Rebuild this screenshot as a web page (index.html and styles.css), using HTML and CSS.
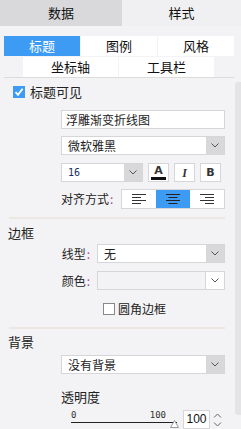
FILE: index.html
```html
<!DOCTYPE html>
<html lang="zh">
<head>
    <meta charset="UTF-8">
    <title>样式设置</title>
    <link rel="stylesheet" href="styles.css">
</head>
<body>

<div class="top-tabs">
    <div class="top-tab">数据</div>
    <div class="top-tab active">样式</div>
</div>

<div class="body-wrap">
    <div class="panel">
        <div class="sub-tabs">
            <div class="sub-row">
                <div class="sub-tab active">标题</div>
                <div class="sub-tab">图例</div>
                <div class="sub-tab">风格</div>
            </div>
            <div class="sub-row second">
                <div class="sub-tab">坐标轴</div>
                <div class="sub-tab">工具栏</div>
            </div>
        </div>

        <label class="check-row visible">
            <span class="check on">
                <svg width="10" height="10" viewBox="0 0 10 10"><path d="M1.5 5.2 L4 7.8 L8.6 1.8" fill="none" stroke="#fff" stroke-width="1.8"/></svg>
            </span>
            标题可见
        </label>

        <div class="field title-input"><div class="text-input">浮雕渐变折线图</div></div>
        <div class="field">
            <div class="select"><span class="sel-text">微软雅黑</span><span class="sel-arrow"><svg width="8" height="5" viewBox="0 0 8 5"><path d="M0.5 0.5 L4 4 L7.5 0.5" fill="none" stroke="#555" stroke-width="1"/></svg></span></div>
        </div>

        <div class="field font-row">
            <div class="select size"><span class="sel-text num">16</span><span class="sel-arrow"><svg width="8" height="5" viewBox="0 0 8 5"><path d="M0.5 0.5 L4 4 L7.5 0.5" fill="none" stroke="#555" stroke-width="1"/></svg></span></div>
            <div class="icon-btn color-a"><span class="a-letter">A</span><span class="a-bar"></span></div>
            <div class="icon-btn italic">I</div>
            <div class="icon-btn bold">B</div>
        </div>

        <div class="align-row">
            <span class="label">对齐方式<span class="colon">:</span></span>
            <div class="seg">
                <div class="seg-btn">
                    <svg width="14" height="11" viewBox="0 0 14 11"><path d="M0 0.5H14M0 3.5H9M0 6.5H14M0 9.5H9" stroke="#333" stroke-width="1"/></svg>
                </div>
                <div class="seg-btn active">
                    <svg width="14" height="11" viewBox="0 0 14 11"><path d="M0 0.5H14M2.5 3.5H11.5M0 6.5H14M2.5 9.5H11.5" stroke="#222" stroke-width="1"/></svg>
                </div>
                <div class="seg-btn">
                    <svg width="14" height="11" viewBox="0 0 14 11"><path d="M0 0.5H14M5 3.5H14M0 6.5H14M5 9.5H14" stroke="#333" stroke-width="1"/></svg>
                </div>
            </div>
        </div>

        <div class="divider"></div>

        <div class="section-title">边框</div>
        <div class="form-row">
            <span class="label right">线型<span class="colon">:</span></span>
            <div class="select grow"><span class="sel-text">无</span><span class="sel-arrow"><svg width="8" height="5" viewBox="0 0 8 5"><path d="M0.5 0.5 L4 4 L7.5 0.5" fill="none" stroke="#555" stroke-width="1"/></svg></span></div>
        </div>
        <div class="form-row next">
            <span class="label right">颜色<span class="colon">:</span></span>
            <div class="select grow disabled"><span class="sel-text"></span><span class="sel-arrow"><svg width="8" height="5" viewBox="0 0 8 5"><path d="M0.5 0.5 L4 4 L7.5 0.5" fill="none" stroke="#555" stroke-width="1"/></svg></span></div>
        </div>
        <label class="check-row round">
            <span class="check"></span>
            圆角边框
        </label>

        <div class="divider second"></div>

        <div class="section-title bg">背景</div>
        <div class="field bg-select">
            <div class="select"><span class="sel-text">没有背景</span><span class="sel-arrow"><svg width="8" height="5" viewBox="0 0 8 5"><path d="M0.5 0.5 L4 4 L7.5 0.5" fill="none" stroke="#555" stroke-width="1"/></svg></span></div>
        </div>
        <div class="opacity-label">透明度</div>
        <div class="slider-row">
            <div class="slider">
                <div class="ticks"><span>0</span><span>100</span></div>
                <div class="track"></div>
                <svg class="thumb" width="9" height="8" viewBox="0 0 9 8"><path d="M4.5 0.5 L8.5 7.5 L0.5 7.5 Z" fill="#fff" stroke="#999" stroke-width="1"/></svg>
            </div>
            <div class="spin">
                <span class="spin-val">100</span>
                <span class="spin-arrows">
                    <svg width="9" height="16" viewBox="0 0 9 16"><path d="M1 5.5 L4.5 2 L8 5.5 M1 10.5 L4.5 14 L8 10.5" fill="none" stroke="#666" stroke-width="1"/></svg>
                </span>
            </div>
        </div>
    </div>
    <div class="scroll"><div class="thumb-bar"></div></div>
</div>

</body>
</html>
```

FILE: styles.css
```css
body {
    margin: 0;
    width: 241px;
    height: 429px;
    overflow: hidden;
    background: #f3f3f5;
    font-family: "Noto Sans CJK SC", "Liberation Sans", sans-serif;
    font-size: 12px;
    line-height: 16px;
    color: #222;
}

.top-tabs {
    display: flex;
    height: 26px;
}

.top-tab {
    flex: 0 0 122px;
    background: #d9d9dc;
    text-align: center;
    line-height: 26px;
    font-size: 13px;
    color: #111;
}

.top-tab.active {
    flex: 1;
    background: #f0f0f2;
}

.body-wrap {
    display: flex;
}

.panel {
    width: 235px;
}

.scroll {
    width: 6px;
    padding-top: 56px;
}

.thumb-bar {
    height: 333px;
    background: #e4e4e7;
    border-radius: 3px 0 0 3px;
}

/* sub tabs */
.sub-tabs {
    margin: 10px 1px 0 4px;
    border-bottom: 1px solid #dcdcdc;
}

.sub-row {
    display: flex;
    gap: 1px;
}

.sub-row.second {
    margin-top: 1px;
    padding-left: 19px;
}

.sub-tab {
    flex: 0 0 76px;
    height: 20px;
    line-height: 20px;
    font-size: 13px;
    background: #fff;
    text-align: center;
    color: #111;
}

.sub-row.second .sub-tab {
    flex: 0 0 95px;
}

.sub-tab.active {
    background: #3e9bf4;
    color: #fff;
}

/* checkbox */
.check-row {
    display: flex;
    align-items: center;
    gap: 5px;
    height: 12px;
    white-space: nowrap;
}

.check-row.visible {
    margin: 8px 0 0 13px;
    font-size: 13px;
}

.check {
    flex: 0 0 auto;
    width: 10px;
    height: 10px;
    border: 1px solid #777;
    background: #fff;
    display: flex;
    align-items: center;
    justify-content: center;
}

.check.on {
    border-color: #3e9bf4;
    background: #3e9bf4;
}

.check-row.round {
    margin: 13px 0 0 103px;
    gap: 3px;
}

.check-row.round .check {
    border-color: #888;
}

/* fields */
.field {
    margin: 7px 0 0 61px;
    width: 164px;
}

.field.title-input {
    margin-top: 12px;
}

.text-input {
    height: 17px;
    line-height: 17px;
    background: #fff;
    border: 1px solid #d6d6d8;
    padding-left: 4px;
}

.select {
    display: flex;
    height: 19px;
    background: #fff;
    border: 1px solid #d6d6d8;
    box-sizing: border-box;
}

.sel-text {
    flex: 1;
    line-height: 17px;
    padding-left: 6px;
}

.sel-text.num {
    font-family: "DejaVu Sans Mono", monospace;
    font-size: 10px;
    color: #1a2a6a;
}

.sel-arrow {
    width: 18px;
    background: #d8d8db;
    display: flex;
    align-items: center;
    justify-content: center;
}

.select.disabled {
    background: #f3f3f5;
}

.select.disabled .sel-arrow {
    background: #fff;
    border-left: 1px solid #d6d6d8;
}

.font-row {
    display: flex;
    gap: 5px;
    height: 19px;
    margin-top: 8px;
}

.select.size {
    flex: 0 0 82px;
}

.icon-btn {
    width: 21px;
    height: 19px;
    box-sizing: border-box;
    background: #fff;
    border: 1px solid #d6d6d8;
    display: flex;
    align-items: center;
    justify-content: center;
    font-family: "DejaVu Sans", sans-serif;
    color: #333;
}

.color-a {
    flex-direction: column;
}

.a-letter {
    font-weight: bold;
    font-size: 11px;
    line-height: 10px;
}

.a-bar {
    width: 15px;
    height: 3px;
    background: #111;
    margin-top: 1px;
}

.italic {
    font-style: italic;
    font-weight: bold;
    font-family: "Liberation Serif", serif;
    font-size: 12px;
}

.bold {
    font-weight: bold;
    font-size: 11px;
}

.align-row {
    display: flex;
    align-items: center;
    gap: 8px;
    height: 20px;
    margin: 7px 0 0 61px;
    white-space: nowrap;
}

.colon {
    color: #b04090;
    margin-left: 1px;
}

.seg {
    display: flex;
    border: 1px solid #d6d6d8;
    background: #fff;
    height: 20px;
    box-sizing: border-box;
}

.seg-btn {
    width: 34px;
    display: flex;
    align-items: center;
    justify-content: center;
}

.seg-btn.active {
    background: #3e9bf4;
}

.divider {
    height: 2px;
    background: #ece8e1;
    margin: 8px 10px 0 9px;
}

.divider.second {
    margin-top: 12px;
}

.section-title {
    margin: 6px 0 0 8px;
    height: 16px;
    font-size: 13px;
}

.section-title.bg {
    margin-top: 5px;
}

.form-row {
    display: flex;
    align-items: center;
    margin: 3px 10px 0 0;
    height: 19px;
    white-space: nowrap;
}

.form-row.next {
    margin-top: 8px;
}

.label.right {
    width: 90px;
    text-align: right;
    margin-right: 7px;
}

.select.grow {
    flex: 1;
}

.field.bg-select {
    margin-top: 5px;
}

.opacity-label {
    margin: 15px 0 0 61px;
    height: 16px;
    font-size: 13px;
}

.slider-row {
    display: flex;
    margin: 5px 0 0 71px;
    gap: 4px;
    height: 19px;
}

.slider {
    position: relative;
    width: 108px;
    height: 19px;
}

.ticks {
    display: flex;
    justify-content: space-between;
    width: 95px;
    height: 10px;
    line-height: 10px;
    font-family: "DejaVu Sans Mono", monospace;
    font-size: 9px;
    color: #333;
}

.track {
    width: 106px;
    height: 1px;
    background: #222;
    margin-top: 2px;
}

.thumb {
    position: absolute;
    right: 0;
    bottom: 1px;
}

.spin {
    display: flex;
    align-items: center;
    height: 19px;
}

.spin-val {
    width: 25px;
    height: 17px;
    line-height: 17px;
    background: #fff;
    border: 1px solid #d6d6d8;
    text-align: center;
    font-family: "Liberation Sans", sans-serif;
    font-size: 12px;
    color: #111;
}

.spin-arrows {
    margin-left: 3px;
    display: flex;
}
```
